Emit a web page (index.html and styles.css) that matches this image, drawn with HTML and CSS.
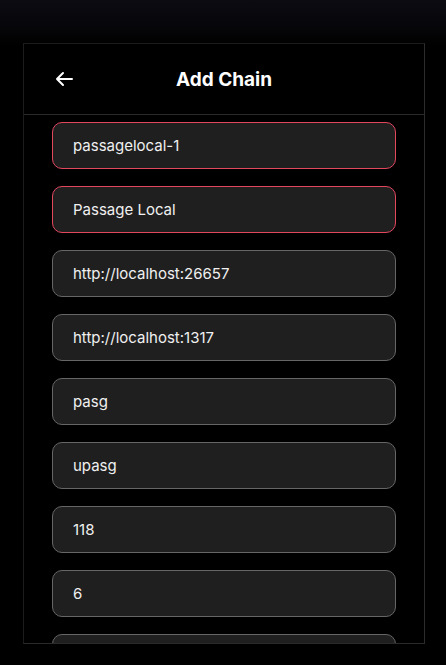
FILE: index.html
```html
<!DOCTYPE html>
<html>
<head>
<meta charset="utf-8">
<link rel="stylesheet" href="styles.css">
</head>
<body>
<div class="panel">
  <div class="header">
    <svg class="back" width="20" height="16" viewBox="0 0 20 16"><path d="M18 8H3M9 2L3 8l6 6" fill="none" stroke="#fff" stroke-width="2" stroke-linecap="round" stroke-linejoin="round"/></svg>
    <h1 class="title">Add Chain</h1>
  </div>
  <div class="form">
    <div class="field error">passagelocal-1</div>
    <div class="field error">Passage Local</div>
    <div class="field">http://localhost:26657</div>
    <div class="field">http://localhost:1317</div>
    <div class="field">pasg</div>
    <div class="field">upasg</div>
    <div class="field">118</div>
    <div class="field">6</div>
    <div class="field">&nbsp;</div>
  </div>
</div>
</body>
</html>
```
FILE: styles.css
```css
html, body {
  margin: 0;
  padding: 0;
}
body {
  background: linear-gradient(to bottom, #0c0b12 0px, #060609 28px, #000 46px);
  height: 665px;
  overflow: hidden;
  font-family: Inter, "Noto Sans", sans-serif;
  color: #f2f2f2;
}
.panel {
  margin: 43px 0 0 23px;
  width: 400px;
  height: 599px;
  border: 1px solid #1c1c1c;
  border-right-color: #2c2c2c;
  border-bottom-color: #2a2a2a;
  background: #000;
  overflow: hidden;
  display: flex;
  flex-direction: column;
}
.header {
  height: 70px;
  flex: none;
  border-bottom: 1px solid #2a2a2a;
  display: flex;
  align-items: center;
  justify-content: center;
  position: relative;
}
.back {
  position: absolute;
  left: 30px;
  top: 27px;
}
.title {
  margin: 0;
  font-size: 19px;
  font-weight: 700;
  color: #fff;
  padding-top: 1px;
}
.form {
  padding: 7px 28px 0 28px;
  display: flex;
  flex-direction: column;
  gap: 17px;
}
.field {
  height: 45px;
  flex: none;
  border: 1px solid #666;
  border-radius: 10px;
  background: #1f1f1f;
  padding: 0 20px;
  display: flex;
  align-items: center;
  font-size: 15px;
  color: #f0f0f0;
}
.field.error {
  border-color: #e2475c;
}
```
